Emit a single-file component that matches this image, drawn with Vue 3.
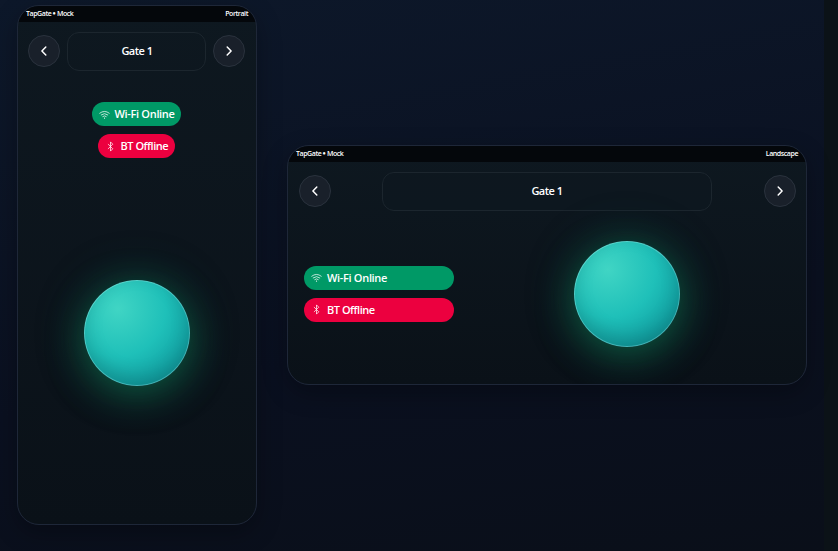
<script setup>
const frames = [
  { id: 'portrait', label: 'Portrait' },
  { id: 'landscape', label: 'Landscape' },
]
</script>

<template>
  <main class="stage">
    <section v-for="f in frames" :key="f.id" class="device" :class="f.id">
      <header class="status">
        <span>TapGate <b>•</b> Mock</span>
        <span>{{ f.label }}</span>
      </header>
      <nav class="nav">
        <button class="arrow" aria-label="Previous">
          <svg viewBox="0 0 16 16"><path d="M9.8 4 5.9 8l3.9 4" /></svg>
        </button>
        <h1 class="title">Gate 1</h1>
        <button class="arrow" aria-label="Next">
          <svg viewBox="0 0 16 16"><path d="M6.2 4l3.9 4-3.9 4" /></svg>
        </button>
      </nav>
      <div class="content">
        <div class="pills">
          <div class="pill online">
            <svg class="wifi" viewBox="0 0 12 12">
              <path d="M.8 4.6Q6 .5 11.2 4.6M2.4 6.4Q6 3.5 9.6 6.4M4.1 8.2Q6 6.6 7.9 8.2" />
              <circle cx="6" cy="9.9" r=".7" />
            </svg>
            <span>Wi-Fi Online</span>
          </div>
          <div class="pill offline">
            <svg class="bt" viewBox="0 0 12 12">
              <path d="M3.5 3.6 8.5 8.5 6 11V1l2.5 2.5-5 4.9" />
            </svg>
            <span>BT Offline</span>
          </div>
        </div>
        <div class="orb-area"><button class="orb" aria-label="Open gate"></button></div>
      </div>
    </section>
  </main>
</template>

<style>
html, body { margin: 0; background: #0b1217; overflow: hidden; }
</style>

<style scoped>
* { box-sizing: border-box; }
.stage {
  display: flex;
  align-items: center;
  gap: 30px;
  width: 824px;
  height: 551px;
  padding: 0 17px 21px;
  background: linear-gradient(170deg, #0d182a 0%, #0a1020 60%, #0a0f19 100%);
  font-family: "Open Sans", "Noto Sans", sans-serif;
  color: #fff;
}
.device {
  display: flex;
  flex-direction: column;
  flex: none;
  overflow: hidden;
  border: 1px solid #1e2738;
  border-radius: 22px;
  background: linear-gradient(180deg, #0e1820, #0a1118);
  box-shadow: 0 8px 24px rgba(0, 0, 0, .28);
}
.portrait { width: 240px; height: 520px; }
.landscape { width: 520px; height: 240px; }
.status {
  display: flex;
  justify-content: space-between;
  align-items: center;
  flex: none;
  height: 16px;
  padding: 0 8px 2px;
  background: #04070b;
  font-size: 7px;
  font-weight: 600;
  letter-spacing: -.42px;
}
.status b { font-weight: 800; letter-spacing: 0; }
.nav {
  display: flex;
  align-items: center;
  justify-content: space-between;
  flex: none;
  padding: 10px 11px 0 10px;
}
.landscape .nav { padding: 10px 10px 0 11px; }
.arrow {
  display: grid;
  place-items: center;
  width: 32px;
  height: 32px;
  margin-bottom: 2px;
  padding: 0;
  border: 1px solid #2a323d;
  border-radius: 50%;
  background: #19202a;
}
.arrow svg { width: 16px; height: 16px; }
svg { fill: none; stroke: #fff; stroke-linecap: round; stroke-linejoin: round; }
.arrow path { stroke-width: 1.5; }
.title {
  display: grid;
  place-items: center;
  width: 139px;
  height: 39px;
  margin: 0;
  padding: 0 0 2px 1px;
  border: 1px solid #1c262e;
  border-radius: 12px;
  background: rgba(14, 24, 32, .5);
  font-size: 11px;
  font-weight: 650;
  letter-spacing: -.5px;
}
.landscape .title { width: 330px; margin-right: 2px; }
.content { display: flex; flex: 1; min-height: 0; }
.portrait .content { flex-direction: column; align-items: center; padding-top: 31px; }
.landscape .content { align-items: center; padding: 0 0 7px 16px; }
.pills { display: flex; flex-direction: column; align-items: center; gap: 8px; }
.portrait .pills { padding-right: 2px; }
.landscape .pills { width: 150px; align-items: stretch; padding-bottom: 1px; }
.pill {
  display: flex;
  align-items: center;
  height: 24px;
  border-radius: 12px;
  padding: 0 6px 0 7px;
  font-size: 11px;
  font-weight: 600;
  letter-spacing: -.32px;
  white-space: nowrap;
}
.pill span { padding-bottom: 1px; }
.offline span { letter-spacing: -.48px; }
.pill svg { width: 11px; height: 11px; flex: none; margin-right: 5px; stroke-width: .8; }
.online { background: #009966; }
.offline { background: #ec003f; }
.portrait .online { width: 89px; }
.portrait .offline { width: 77px; }
.wifi circle { fill: #fff; stroke: none; }
.orb-area { display: grid; place-items: center; }
.portrait .orb-area { margin-top: 122px; }
.landscape .orb-area { flex: 1; padding-right: 6px; }
.orb {
  width: 106px;
  height: 106px;
  padding: 0;
  border: 1px solid rgba(255, 255, 255, .2);
  border-radius: 50%;
  background: radial-gradient(circle at 32% 27%, #40d5c4 0%, #1fc0b9 45%, #13a5a6 72%, #0c858c 100%);
  background-origin: border-box;
  box-shadow: inset 0 -8px 18px rgba(0, 0, 0, .15), 0 8px 38px rgba(16, 160, 100, .46), 0 0 54px rgba(0, 120, 100, .24);
}
</style>
